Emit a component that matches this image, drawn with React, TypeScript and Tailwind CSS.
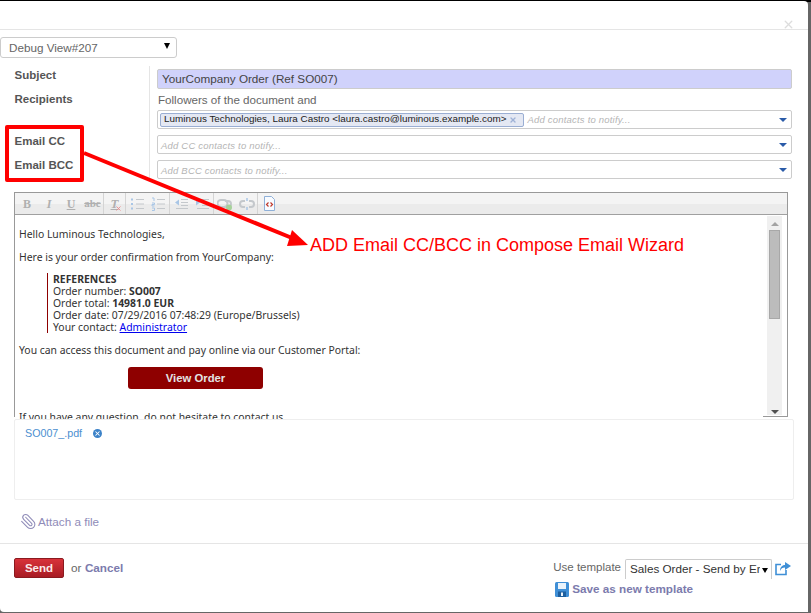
import React from "react";
import { Paperclip, X } from "lucide-react";

function ComboRow({ children }: { children?: React.ReactNode }) {
  return (
    <div className="flex h-[19px] w-[635px] items-center rounded-[2px] border border-[#ccc] bg-white pl-[2px] pr-[4px]">
      {children}
      <span className="ml-auto h-0 w-0 border-x-[4px] border-t-[4px] border-x-transparent border-t-[#2a5ba8]" />
    </div>
  );
}

function Placeholder({ text }: { text: string }) {
  return <span className="ml-[1px] mt-px block text-[9.5px] italic leading-[13px] tracking-[0.2px] text-[#b5b5b5]">{text}</span>;
}

function Cell({ children, sep }: { children: React.ReactNode; sep?: boolean }) {
  return (
    <div className={sep ? "flex h-full w-[22px] items-center justify-center border-r border-[#d4d4d4]" : "flex h-full w-[22px] items-center justify-center"}>
      {children}
    </div>
  );
}

const G = "#c4c8cc";
const B = "#a9c6e6";

function Lines({ x = 6 }: { x?: number }) {
  return (
    <g stroke={G} strokeWidth="1">
      <path d={`M${x} 2.5H14M${x} 7H14M${x} 11.5H14`} />
    </g>
  );
}

function Toolbar() {
  return (
    <div className="flex h-[22px] items-center border-b border-[#a0a0a0] bg-[linear-gradient(#f4f4f4_0%,#f4f4f4_50%,#ebebeb_50%,#ebebeb_100%)] pl-[1px] font-['Liberation_Serif',serif] text-[#b0b0b0]">
      <Cell><b className="text-[12px]">B</b></Cell>
      <Cell><i className="text-[12px] font-bold">I</i></Cell>
      <Cell><u className="text-[12px] font-bold">U</u></Cell>
      <Cell sep><s className="text-[11px] font-bold">abc</s></Cell>
      <Cell sep>
        <span className="relative text-[13px] font-bold">
          <i className="underline">T</i>
          <X size={7} strokeWidth={3} className="absolute -right-[4px] bottom-[1px] text-[#ec8a8a]" />
        </span>
      </Cell>
      <Cell>
        <svg width="15" height="14" viewBox="0 0 15 14">
          <Lines />
          <path d="M1 2.500h2M1 7h2M1 11.500h2" stroke={B} strokeWidth="2" />
        </svg>
      </Cell>
      <Cell sep>
        <svg width="15" height="14" viewBox="0 0 15 14">
          <Lines />
          <path d="M1 1h2v3M1 6h2.500v1.500H1V9h2.500M1 11h2.500v2.500H1" fill="none" stroke={B} strokeWidth="1" />
        </svg>
      </Cell>
      <Cell>
        <svg width="15" height="14" viewBox="0 0 15 14">
          <path d="M7 2.500h7M7 5.500h7M7 8.500h7M2 11.500h12" stroke={G} />
          <path d="M5 2.500L1 5.500l4 3z" fill={B} />
        </svg>
      </Cell>
      <Cell sep>
        <svg width="15" height="14" viewBox="0 0 15 14">
          <path d="M1 2.500h13M7 5.500h7M7 8.500h7M2 11.500h12" stroke={G} />
          <path d="M1 2.500l4 3-4 3z" fill={B} />
        </svg>
      </Cell>
      <Cell>
        <svg width="16" height="14" viewBox="0 0 16 14">
          <path d="M4 3h3a3 3 0 0 1 0 7H4a3 3 0 0 1 0-7zM8 4h3a3 3 0 0 1 0 6H8" fill="none" stroke={G} strokeWidth="2" />
          <circle cx="12" cy="10.500" r="3" fill="#a6d19a" />
        </svg>
      </Cell>
      <Cell sep>
        <svg width="16" height="14" viewBox="0 0 16 14">
          <path d="M6 4H4a3 3 0 0 0 0 6h2M10 4h2a3 3 0 0 1 0 6h-2" fill="none" stroke={G} strokeWidth="2" />
          <path d="M8 1v3M8 10v3" stroke={B} strokeWidth="1.500" />
        </svg>
      </Cell>
      <Cell>
        <svg width="13" height="15" viewBox="0 0 13 15">
          <path d="M1.500.5h7l3 3v11h-10z" fill="#f8fbff" stroke="#8fb0d8" />
          <path d="M5.500 6.500L3.500 8.500l2 2M7.500 6.500l2 2-2 2" fill="none" stroke="#c0392b" strokeWidth="1.200" />
        </svg>
      </Cell>
    </div>
  );
}

function Scrollbar() {
  return (
    <div className="flex h-[199px] w-[15px] shrink-0 flex-col items-center bg-[#f0f0f0]">
      <span className="mt-[6px] h-0 w-0 border-x-[4px] border-b-[4px] border-x-transparent border-b-[#a3a3a3]" />
      <div className="mt-[4px] h-[89px] w-[11px] border border-[#a8a8a8] bg-[#bcbcbc]" />
      <span className="mt-auto mb-[1px] h-0 w-0 border-x-[4px] border-t-[4px] border-x-transparent border-t-[#505050]" />
    </div>
  );
}

export default function App() {
  return (
    <div className="relative h-[613px] w-[811px] overflow-hidden bg-[#666] font-['Liberation_Sans',sans-serif]">
      <div className="h-[2px] w-full bg-black" />
      <div className="relative -mt-px h-[611px] w-[808px] rounded-tr-[4px] rounded-bl-[4px] bg-white">
        <div className="flex h-[29px] justify-end border-b border-[#e5e5e5]">
          <X size={13} strokeWidth={2.5} className="mr-[13px] mt-[17px] text-[#ddd]" />
        </div>

        <div className="relative mt-[7px] flex h-[21px] w-[177px] items-center rounded-[3px] border border-[#ccc] bg-white pl-[8px] text-[11.7px] text-[#666]">
          Debug View#207
          <span className="absolute right-[6px] top-[5px] h-0 w-0 border-x-[3.5px] border-t-[6px] border-x-transparent border-t-black" />
        </div>

        <div className="mt-[8px] flex">
          <div className="h-[114px] w-[150px] shrink-0 border-r border-[#e5e5e5] pl-[14.500px] text-[11.5px] font-bold text-[#555]">
            <div className="mt-[2px] leading-[14px]">Subject</div>
            <div className="mt-[10px] leading-[14px]">Recipients</div>
            <div className="mt-[28px] leading-[14px]">Email CC</div>
            <div className="mt-[10px] leading-[14px]">Email BCC</div>
          </div>
          <div className="mt-[3px] pl-[7px]">
            <div className="flex h-[20px] w-[635px] items-center rounded-[2px] border border-[#ccc] bg-[#d0d2fb] pl-[4px] text-[11.7px] text-[#444]">
              YourCompany Order (Ref SO007)
            </div>
            <div className="mb-[2px] mt-[3px] pl-px text-[11.6px] leading-[16px] text-[#666]">Followers of the document and</div>
            <ComboRow>
              <span className="flex h-[14px] items-center rounded-[2px] border border-[#9aaed3] bg-[#e4e8f3] pl-[3px] pr-[6px] text-[9.9px] text-[#222]">
                Luminous Technologies, Laura Castro &lt;laura.castro@luminous.example.com&gt;
                <X size={8} strokeWidth={4} className="ml-[3px] text-[#9fb2d6]" />
              </span>
              <span className="ml-[2px] -mt-[1px]"><Placeholder text="Add contacts to notify..." /></span>
            </ComboRow>
            <div className="mt-[6px]">
              <ComboRow><Placeholder text="Add CC contacts to notify..." /></ComboRow>
            </div>
            <div className="mt-[6px]">
              <ComboRow><Placeholder text="Add BCC contacts to notify..." /></ComboRow>
            </div>
          </div>
        </div>

        <div className="ml-[14px] mt-[12px] h-[225px] w-[774px] border border-[#999] bg-white">
          <Toolbar />
          <div className="flex h-[201px] pt-[1px]">
            <div className="relative w-[752px] shrink-0 pl-[4px] pt-[12px] font-['Noto_Sans',sans-serif] text-[10.4px] leading-[12px] text-[#333]">
              <div>Hello Luminous Technologies,</div>
              <div className="mt-[11px]">Here is your order confirmation from YourCompany:</div>
              <div className="ml-[28px] mt-[10px] border-l border-[#8e0000] pl-[5px]">
                <div className="font-bold">REFERENCES</div>
                <div>Order number: <b>SO007</b></div>
                <div>Order total: <b>14981.0 EUR</b></div>
                <div>Order date: 07/29/2016 07:48:29 (Europe/Brussels)</div>
                <div>Your contact: <a className="text-[#0000ee] underline">Administrator</a></div>
              </div>
              <div className="mt-[11px]">You can access this document and pay online via our Customer Portal:</div>
              <div className="ml-[109px] mt-[11px] flex h-[22px] w-[135px] items-center justify-center rounded-[3px] bg-[#8e0000] font-['Liberation_Sans',sans-serif] text-[11.3px] font-bold text-[#e4e4e4]">
                View Order
              </div>
              <div className="absolute left-0 top-[194px] h-[14px] w-[748px] bg-white pl-[4px] pt-px">
                If you have any question, do not hesitate to contact us.
              </div>
            </div>
            <Scrollbar />
          </div>
        </div>

        <div className="relative z-10 ml-[14px] mt-[2px] h-[81px] w-[780px] rounded-[2px] border border-[#eee] bg-white pl-[10px] pt-[7px] text-[10.7px] leading-[13px] text-[#4c8fd0]">
          <span className="inline-flex items-center">
            SO007_.pdf
            <span className="ml-[11px] flex h-[9px] w-[9px] items-center justify-center rounded-full bg-[#3c82c8]">
              <X size={7} strokeWidth={3.500} className="text-white" />
            </span>
          </span>
        </div>

        <div className="ml-[20px] mt-[13px] flex h-[17px] items-center text-[11.7px] text-[#8f8bb8]">
          <Paperclip size={17} strokeWidth={1.500} className="-scale-x-100" />
          <span className="ml-[1px]">Attach a file</span>
        </div>

        <div className="mt-[13px] flex h-[68px] border-t border-[#e5e5e5] pl-[14px] pr-[17px]">
          <div className="mt-[14px] flex h-[20px] items-center text-[11.7px] text-[#666]">
            <div className="flex h-[20px] w-[50px] items-center justify-center rounded-[2px] border border-[#8a1a1f] bg-[linear-gradient(#d8323a,#a81c24)] pt-px text-[11.5px] font-bold text-[#fbeaea]">
              Send
            </div>
            <span className="ml-[7px]">or</span>
            <span className="ml-[3.500px] font-bold text-[#7c7bad]">Cancel</span>
          </div>
          <div className="ml-auto flex flex-col">
            <div className="mt-[15px] flex items-start">
              <span className="text-[11.5px] text-[#666]">Use template</span>
              <div className="relative ml-[4px] h-[20px] w-[147px] overflow-hidden rounded-t-[2px] border-x border-t border-[#ccc] bg-white pl-[4px] text-[11.7px] leading-[17px] text-[#333]">
                <span className="block w-[130px] overflow-hidden whitespace-nowrap">Sales Order - Send by Email</span>
                <span className="absolute right-[3px] top-[8px] h-0 w-0 border-x-[3px] border-t-[5px] border-x-transparent border-t-black" />
              </div>
              <svg width="16" height="14" viewBox="0 0 16 14" className="ml-[3px] mt-[3px]">
                <path d="M6 2.500H1v10h10V8" fill="none" stroke="#3f8fd6" strokeWidth="1.600" />
                <path d="M10 0l6 4-6 4V5.500C7.500 5.500 6 6.500 5 9c0-3.500 2-6 5-6z" fill="#3f8fd6" />
              </svg>
            </div>
            <div className="ml-[2px] mt-[3px] flex items-start">
              <svg width="14" height="15" viewBox="0 0 14 15">
                <rect width="14" height="15" rx="1.500" fill="#3f8fd6" />
                <rect x="3" y="1" width="8" height="6" fill="#eaf3fb" />
                <rect x="3" y="9.500" width="8" height="5.500" fill="#1d5f9f" />
                <rect x="6" y="10.500" width="2" height="3.500" fill="#eaf3fb" />
              </svg>
              <span className="ml-[3px] text-[11.7px] font-bold leading-[13px] text-[#7c7bad]">Save as new template</span>
            </div>
          </div>
        </div>
      </div>

      <div className="absolute left-[5px] top-[125px] z-20 h-[57px] w-[79px] rounded-[2px] border-[4px] border-[#ff0000]" />
      <svg width="811" height="613" className="pointer-events-none absolute left-0 top-0 z-20">
        <line x1="84" y1="153" x2="292" y2="238" stroke="#ff0000" strokeWidth="4" />
        <polygon points="308,245 287,246 292,230" fill="#ff0000" />
      </svg>
      <div className="absolute left-[310px] top-[234px] z-20 whitespace-nowrap text-[18px] leading-[22px] text-[#ff0000]">
        ADD Email CC/BCC in Compose Email Wizard
      </div>
    </div>
  );
}
